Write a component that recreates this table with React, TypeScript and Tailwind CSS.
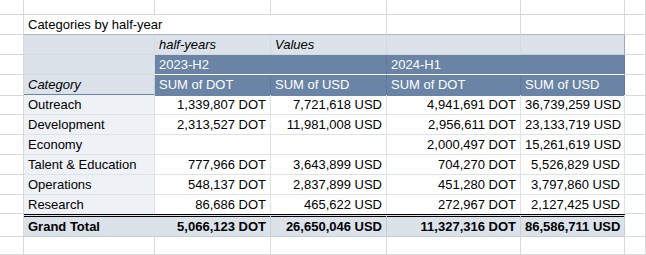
import React from 'react';

const cols = 'grid grid-cols-[24px_131px_116px_116px_134px_104px_1fr]';

const dataRows = [
  ['Outreach', '1,339,807 DOT', '7,721,618 USD', '4,941,691 DOT', '36,739,259 USD'],
  ['Development', '2,313,527 DOT', '11,981,008 USD', '2,956,611 DOT', '23,133,719 USD'],
  ['Economy', '', '', '2,000,497 DOT', '15,261,619 USD'],
  ['Talent & Education', '777,966 DOT', '3,643,899 USD', '704,270 DOT', '5,526,829 USD'],
  ['Operations', '548,137 DOT', '2,837,899 USD', '451,280 DOT', '3,797,860 USD'],
  ['Research', '86,686 DOT', '465,622 USD', '272,967 DOT', '2,127,425 USD'],
];

function Cell({ children, className = '' }: { children?: React.ReactNode; className?: string }) {
  return (
    <div className={`border-r border-b border-[#d9d9d9] px-1 whitespace-nowrap leading-[19px] ${className}`}>
      {children}
    </div>
  );
}

function Gutter() {
  return (
    <>
      <div className="border-r border-b border-[#d9d9d9]" />
    </>
  );
}

export default function App() {
  return (
    <div
      className="bg-white w-[646px] h-[255px] overflow-hidden text-[13px] text-black"
      style={{ fontFamily: '"Liberation Sans", Arial, sans-serif' }}
    >
      {/* top partial row */}
      <div className={`${cols} h-[15px]`}>
        <Gutter />
        <Cell />
        <Cell />
        <Cell />
        <Cell />
        <Cell />
        <Cell />
      </div>

      {/* title */}
      <div className={`${cols} h-[20px]`}>
        <Gutter />
        <Cell className="overflow-visible border-r-0 border-b-[#aab6c6]">Categories by half-year</Cell>
        <Cell className="border-r-0 border-b-[#aab6c6]" />
        <Cell className="border-b-[#aab6c6]" />
        <Cell className="border-b-[#aab6c6]" />
        <Cell className="border-b-[#aab6c6]" />
        <Cell />
      </div>

      {/* half-years / Values */}
      <div className={`${cols} h-[20px]`}>
        <Gutter />
        <Cell className="bg-[#dbe2ea] border-[#c5cdd8]" />
        <Cell className="bg-[#dbe2ea] border-[#c5cdd8] italic">half-years</Cell>
        <Cell className="bg-[#dbe2ea] border-[#c5cdd8] italic">Values</Cell>
        <Cell className="bg-[#dbe2ea] border-[#c5cdd8]" />
        <Cell className="bg-[#dbe2ea] border-b-[#c5cdd8] border-r-[#9aa8bb]" />
        <Cell />
      </div>

      {/* periods */}
      <div className={`${cols} h-[20px]`}>
        <Gutter />
        <Cell className="bg-[#dbe2ea] border-[#c5cdd8]" />
        <Cell className="bg-[#6a84a6] border-r-0 border-b-white text-white">2023-H2</Cell>
        <Cell className="bg-[#6a84a6] border-r-[#62799a] border-b-white" />
        <Cell className="bg-[#6a84a6] border-r-0 border-b-white text-white">2024-H1</Cell>
        <Cell className="bg-[#6a84a6] border-r-[#62799a] border-b-white" />
        <Cell />
      </div>

      {/* column headers */}
      <div className={`${cols} h-[20px]`}>
        <Gutter />
        <Cell className="bg-[#dbe2ea] border-r-[#c5cdd8] border-b-2 border-b-[#6a84a6] italic leading-[18px]">Category</Cell>
        <Cell className="bg-[#6a84a6] border-r-[#62799a] border-b-2 border-b-[#6a84a6] text-white leading-[18px]">SUM of DOT</Cell>
        <Cell className="bg-[#6a84a6] border-r-[#62799a] border-b-2 border-b-[#6a84a6] text-white leading-[18px]">SUM of USD</Cell>
        <Cell className="bg-[#6a84a6] border-r-[#62799a] border-b-2 border-b-[#6a84a6] text-white leading-[18px]">SUM of DOT</Cell>
        <Cell className="bg-[#6a84a6] border-r-[#62799a] border-b-2 border-b-[#6a84a6] text-white leading-[18px]">SUM of USD</Cell>
        <Cell />
      </div>

      {dataRows.map((r, i) => {
        const last = i === dataRows.length - 1;
        const rowCls = last ? 'border-b-0' : '';
        return (
          <div key={r[0]} className={`${cols} ${last ? 'h-[19px]' : 'h-[20px]'}`}>
            <Gutter />
            <Cell className={`bg-[#eef1f5] border-[#dde2e8] ${rowCls}`}>{r[0]}</Cell>
            {r.slice(1).map((v, j) => (
              <Cell key={j} className={`text-right border-[#dde2e8] ${rowCls}`}>
                {v}
              </Cell>
            ))}
            <Cell />
          </div>
        );
      })}

      {/* grand total */}
      <div className={`${cols} h-[21px]`}>
        <Gutter />
        <Cell className="bg-[#dce2ea] border-t-[3px] border-t-black border-double border-r-0 border-b-[#c5cdd8] font-bold leading-[17px]">Grand Total</Cell>
        <Cell className="bg-[#dce2ea] border-t-[3px] border-t-black border-double border-r-[#c5cdd8] border-b-[#c5cdd8] font-bold text-right leading-[17px]">5,066,123 DOT</Cell>
        <Cell className="bg-[#dce2ea] border-t-[3px] border-t-black border-double border-r-[#c5cdd8] border-b-[#c5cdd8] font-bold text-right leading-[17px]">26,650,046 USD</Cell>
        <Cell className="bg-[#dce2ea] border-t-[3px] border-t-black border-double border-r-[#c5cdd8] border-b-[#c5cdd8] font-bold text-right leading-[17px]">11,327,316 DOT</Cell>
        <Cell className="bg-[#dce2ea] border-t-[3px] border-t-black border-double border-r-[#c5cdd8] border-b-[#c5cdd8] font-bold text-right leading-[17px]">86,586,711 USD</Cell>
        <Cell />
      </div>

      {/* empty row */}
      <div className={`${cols} h-[20px]`}>
        <Gutter />
        <Cell />
        <Cell />
        <Cell />
        <Cell />
        <Cell />
        <Cell />
      </div>
    </div>
  );
}
